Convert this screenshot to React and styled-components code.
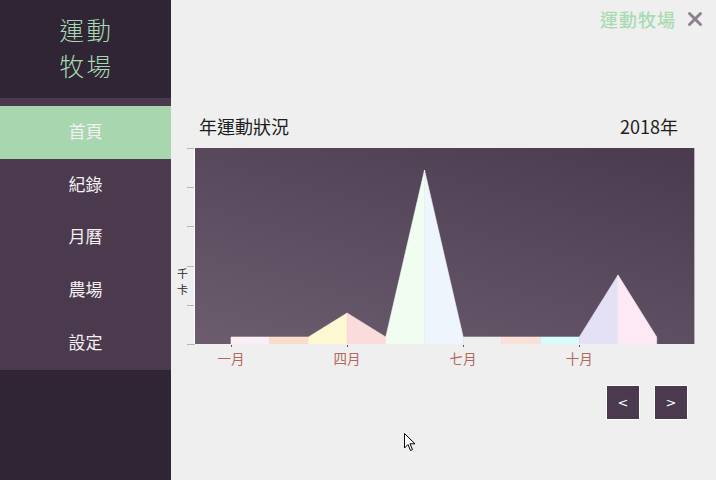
import styled, { createGlobalStyle } from 'styled-components';
import { X } from 'lucide-react';

const CJK = '"Noto Sans CJK TC", "Noto Sans", sans-serif';

const GlobalStyle = createGlobalStyle`
  html, body {
    margin: 0;
    padding: 0;
    background: #efefef;
    font-family: ${CJK};
  }
`;

const MENU = ['首頁', '紀錄', '月曆', '農場', '設定'];

const MONTHS = ['一月', '', '', '四月', '', '', '七月', '', '', '十月', '', ''];

// bar heights in px, one per month
const VALUES = [7, 7, 7, 31, 7, 174, 7, 7, 7, 7, 69, 7];

const COLORS = [
  '#fbeef4', '#f9dccb', '#fdf8d2', '#fbdcdc', '#f1fdf0', '#eef5fc',
  '#efeeee', '#fbe0d8', '#dafbfb', '#e4e0f5', '#fde9f3',
];

const PLOT_W = 499;
const PLOT_H = 196;
const STEP = 38.7;
const OFFSET = 36;
const TICKS = [0, 39, 78, 118, 157, 196];

export default function App() {
  const xs = VALUES.map((_, i) => OFFSET + STEP * i);
  const ys = VALUES.map((v) => PLOT_H - v);

  return (
    <>
      <GlobalStyle />
      <Page>
        <Sidebar>
          <Logo>
            <LogoLine>運動</LogoLine>
            <LogoLine>牧場</LogoLine>
          </Logo>
          <Menu>
            {MENU.map((label, i) => (
              <MenuItem key={label} active={i === 0}>{label}</MenuItem>
            ))}
          </Menu>
        </Sidebar>
        <Main>
          <TopBar>
            <Brand>運動牧場</Brand>
            <Close><X size={22} strokeWidth={3.2} /></Close>
          </TopBar>
          <ChartHeader>
            <span>年運動狀況</span>
            <span>2018年</span>
          </ChartHeader>
          <ChartRow>
            <YAxis>
              <YLabel>千<br />卡</YLabel>
              <svg width="8" height={PLOT_H + 1}>
                {TICKS.map((t) => (
                  <line key={t} x1="0" x2="8" y1={t + 0.5} y2={t + 0.5} stroke="#b8b4b8" />
                ))}
                <line x1="7.5" x2="7.5" y1="0" y2={PLOT_H} stroke="#ffffff" />
              </svg>
            </YAxis>
            <Plot>
              <svg width={PLOT_W} height={PLOT_H} style={{ display: 'block' }}>
                {COLORS.map((c, i) => (
                  <polygon
                    key={c + i}
                    fill={c}
                    stroke={c}
                    strokeWidth="0.6"
                    points={`${xs[i]},${PLOT_H} ${xs[i]},${ys[i]} ${xs[i + 1]},${ys[i + 1]} ${xs[i + 1]},${PLOT_H}`}
                  />
                ))}
              </svg>
            </Plot>
          </ChartRow>
          <XAxis>
            {MONTHS.map((m, i) => (
              <XLabel key={i}>
                {m && <XTick />}
                {m}
              </XLabel>
            ))}
          </XAxis>
          <Pager>
            <PageButton type="button">&lt;</PageButton>
            <PageButton type="button">&gt;</PageButton>
          </Pager>
          <Cursor width="12" height="19" viewBox="0 0 12 19">
            <path d="M0.5 0.5 L0.5 15 L4 11.5 L6.5 17.5 L8.5 16.6 L6 10.8 L11 10.8 Z" fill="#fff" stroke="#000" strokeWidth="1" strokeLinejoin="round" />
          </Cursor>
        </Main>
      </Page>
    </>
  );
}

const Page = styled.div`
  display: flex;
  width: 716px;
  height: 480px;
  overflow: hidden;
`;

const Sidebar = styled.aside`
  display: flex;
  flex-direction: column;
  width: 171px;
  flex-shrink: 0;
  background: #2f2535;
`;

const Logo = styled.div`
  display: flex;
  flex-direction: column;
  align-items: center;
  height: 98px;
  box-sizing: border-box;
  padding: 12px 0 0 2px;
`;

const LogoLine = styled.div`
  font-size: 24.5px;
  line-height: 36px;
  font-weight: 300;
  color: #a9d9b1;
  letter-spacing: 2.5px;
`;

const Menu = styled.nav`
  display: flex;
  flex-direction: column;
  padding: 8px 0 1px;
  background: #4b3a4e;
`;

const MenuItem = styled.div`
  height: 52.6px;
  box-sizing: border-box;
  padding-bottom: 3px;
  display: flex;
  align-items: center;
  justify-content: center;
  font-size: 17px;
  color: #f3f0f3;
  background: ${(props) => (props.active ? '#a8d7af' : 'transparent')};
`;

const Main = styled.main`
  position: relative;
  flex: 1;
  padding: 0 22px 0 24px;
  background: #efefef;
`;

const TopBar = styled.div`
  display: flex;
  align-items: center;
  justify-content: flex-end;
  gap: 8px;
  height: 38px;
  margin-right: -11px;
`;

const Brand = styled.span`
  font-size: 18px;
  font-weight: 500;
  color: #a9dbb1;
  letter-spacing: 1px;
`;

const Close = styled.span`
  display: flex;
  color: #8c818e;
`;

const ChartHeader = styled.div`
  display: flex;
  justify-content: space-between;
  align-items: center;
  height: 26px;
  margin-top: 75px;
  padding: 0 17px 0 4px;
  font-size: 18px;
  color: #1e1e1e;
`;

const ChartRow = styled.div`
  display: flex;
  margin-top: 9px;
  margin-left: -18px;
`;

const YAxis = styled.div`
  display: flex;
  align-items: center;
  width: 18px;
  height: ${PLOT_H + 1}px;
  svg {
    align-self: flex-start;
    margin-left: auto;
  }
`;

const YLabel = styled.div`
  width: 10px;
  margin-top: 68px;
  font-size: 11px;
  line-height: 16px;
  color: #2a2a2a;
  text-align: center;
`;

const Plot = styled.div`
  width: ${PLOT_W}px;
  height: ${PLOT_H}px;
  background: linear-gradient(15deg, #6c5c6e 0%, #5c4d60 45%, #4a3a4e 100%);
  border-right: 1px solid #b8b0b8;
`;

const XAxis = styled.div`
  display: grid;
  grid-template-columns: repeat(12, ${STEP}px);
  padding-left: ${OFFSET - STEP / 2}px;
`;

const XLabel = styled.div`
  position: relative;
  text-align: center;
  font-size: 13.5px;
  line-height: 26px;
  color: #b3675d;
`;

const XTick = styled.span`
  position: absolute;
  top: 0;
  left: 50%;
  width: 1px;
  height: 2px;
  background: #555;
`;

const Pager = styled.div`
  display: flex;
  justify-content: flex-end;
  gap: 14px;
  margin-top: 14px;
  margin-right: 7px;
`;

const PageButton = styled.button`
  width: 34px;
  height: 35px;
  padding: 0;
  border: 1px solid #ffffff;
  background: #4b3a4e;
  color: #ffffff;
  font-family: "DejaVu Sans", sans-serif;
  font-size: 13px;
`;

const Cursor = styled.svg`
  position: absolute;
  left: 233px;
  top: 433px;
`;
